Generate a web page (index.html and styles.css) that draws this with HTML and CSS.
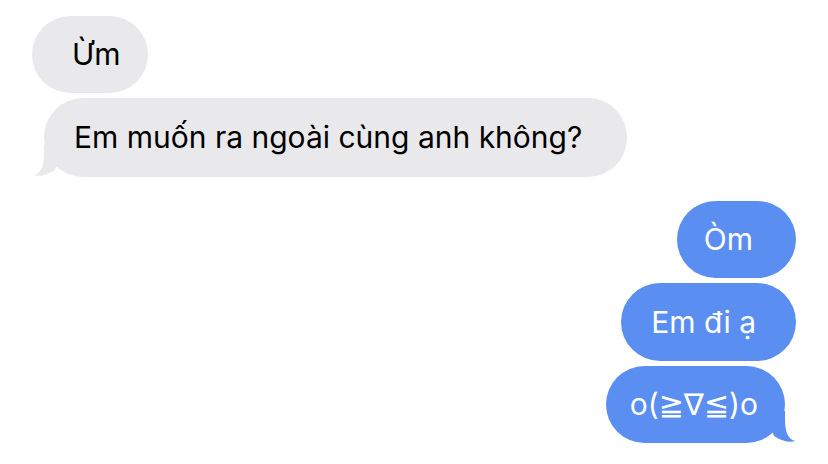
FILE: index.html
```html
<!DOCTYPE html>
<html lang="vi">
<head>
<meta charset="utf-8">
<title>Tin nhắn</title>
<link rel="stylesheet" href="styles.css">
</head>
<body>
<main class="thread">
  <section class="group group-them">
    <div class="bubble them b-um">Ừm</div>
    <div class="bubble them tail b-ask">Em muốn ra ngoài cùng anh không?
      <svg class="tail-svg tail-left" viewBox="-20 -32 32 36" aria-hidden="true"><path d="M-20 -32 L0 -32 L0 -24 Q0 -3 11 -2 Q1 1 -11 -7 Z"/></svg>
    </div>
  </section>
  <section class="group group-me">
    <div class="bubble me b-om">Òm</div>
    <div class="bubble me b-di">Em đi ạ</div>
    <div class="bubble me tail b-face">o(≧∇≦)o
      <svg class="tail-svg tail-right" viewBox="-20 -32 32 36" aria-hidden="true"><path d="M-20 -32 L0 -32 L0 -24 Q0 -3 11 -2 Q1 1 -11 -7 Z"/></svg>
    </div>
  </section>
</main>
</body>
</html>
```

FILE: styles.css
```css
html, body {
  margin: 0;
  padding: 0;
  background: #ffffff;
}

body {
  width: 828px;
  height: 464px;
  overflow: hidden;
  font-family: Inter, "Noto Sans", "DejaVu Sans", sans-serif;
  font-size: 30px;
}

.thread {
  display: flex;
  flex-direction: column;
  padding-top: 16px;
  gap: 24px;
}

.group {
  display: flex;
  flex-direction: column;
  gap: 5px;
}

.group-them {
  align-items: flex-start;
}

.group-me {
  align-items: flex-end;
}

.bubble {
  position: relative;
  height: 77px;
  line-height: 77px;
  border-radius: 39px;
  white-space: nowrap;
  box-sizing: border-box;
}

.them {
  background: #e9e9eb;
  color: #000000;
}

.me {
  background: #5a8ef0;
  color: #ffffff;
}

.b-um {
  margin-left: 32px;
  padding: 0 27px 0 40px;
}

.b-ask {
  margin-left: 44px;
  height: 79px;
  line-height: 79px;
  padding: 0 45px 0 30px;
}

.b-om {
  margin-right: 32px;
  padding: 0 43px 0 27px;
}

.b-di {
  margin-right: 32px;
  height: 78px;
  line-height: 78px;
  padding: 0 40px 0 30px;
}

.b-face {
  margin-right: 43px;
  padding: 0 27px 0 24px;
}

.tail-svg {
  position: absolute;
  bottom: -4px;
  width: 32px;
  height: 36px;
  overflow: visible;
}

.them .tail-svg path {
  fill: #e9e9eb;
}

.me .tail-svg path {
  fill: #5a8ef0;
}

.tail-right {
  right: -12px;
}

.tail-left {
  left: -12px;
  transform: scaleX(-1);
}
```
